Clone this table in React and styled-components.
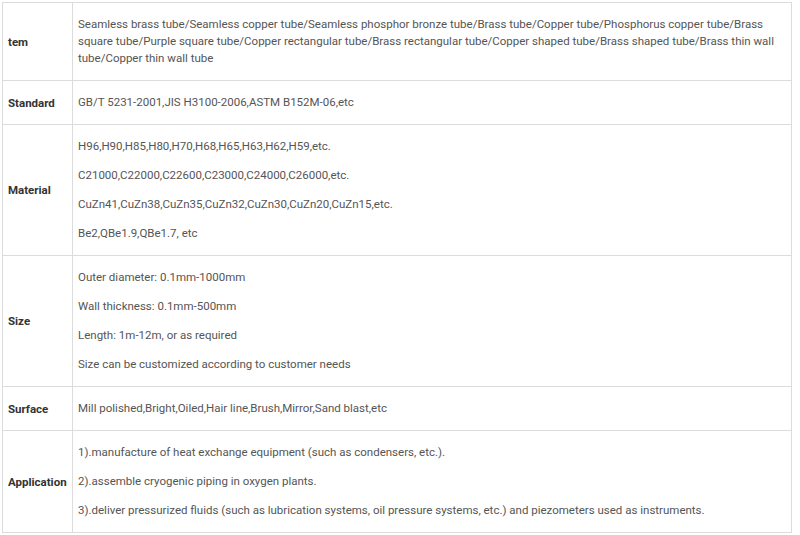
import React from 'react';
import styled, { createGlobalStyle } from 'styled-components';

const GlobalStyle = createGlobalStyle`
    html, body {
        margin: 0;
        padding: 0;
        background: #fff;
    }
`

const Wrapper = styled.div`
    padding: 2px;
    font-family: Roboto, 'Liberation Sans', Arial, sans-serif;
    font-size: 11.5px;
`

const SpecTable = styled.table`
    width: 790px;
    border-collapse: collapse;
    table-layout: fixed;
`

const Label = styled.td`
    width: 59px;
    padding: 1px 5px;
    border: 1px solid #dcdcdc;
    font-weight: bold;
    color: #333;
    vertical-align: middle;
`

const Value = styled.td`
    padding: 1px 5px;
    border: 1px solid #dcdcdc;
    color: #555;
    vertical-align: middle;
`

const Line = styled.p`
    margin: 12px 0;
    line-height: 17px;
`

const rows = [
    {
        label: 'tem',
        lines: ['Seamless brass tube/Seamless copper tube/Seamless phosphor bronze tube/Brass tube/Copper tube/Phosphorus copper tube/Brass square tube/Purple square tube/Copper rectangular tube/Brass rectangular tube/Copper shaped tube/Brass shaped tube/Brass thin wall tube/Copper thin wall tube'],
    },
    {
        label: 'Standard',
        lines: ['GB/T 5231-2001,JIS H3100-2006,ASTM B152M-06,etc'],
    },
    {
        label: 'Material',
        lines: [
            'H96,H90,H85,H80,H70,H68,H65,H63,H62,H59,etc.',
            'C21000,C22000,C22600,C23000,C24000,C26000,etc.',
            'CuZn41,CuZn38,CuZn35,CuZn32,CuZn30,CuZn20,CuZn15,etc.',
            'Be2,QBe1.9,QBe1.7, etc',
        ],
    },
    {
        label: 'Size',
        lines: [
            'Outer diameter: 0.1mm-1000mm',
            'Wall thickness: 0.1mm-500mm',
            'Length: 1m-12m, or as required',
            'Size can be customized according to customer needs',
        ],
    },
    {
        label: 'Surface',
        lines: ['Mill polished,Bright,Oiled,Hair line,Brush,Mirror,Sand blast,etc'],
    },
    {
        label: 'Application',
        lines: [
            '1).manufacture of heat exchange equipment (such as condensers, etc.).',
            '2).assemble cryogenic piping in oxygen plants.',
            '3).deliver pressurized fluids (such as lubrication systems, oil pressure systems, etc.) and piezometers used as instruments.',
        ],
    },
]

const App = () => {
    return (
        <Wrapper>
            <GlobalStyle />
            <SpecTable>
                <tbody>
                    {rows.map((row, index) => (
                        <tr key={index}>
                            <Label>{row.label}</Label>
                            <Value>
                                {row.lines.map((line, i) => <Line key={i}>{line}</Line>)}
                            </Value>
                        </tr>
                    ))}
                </tbody>
            </SpecTable>
        </Wrapper>
    )
}

export default App;
